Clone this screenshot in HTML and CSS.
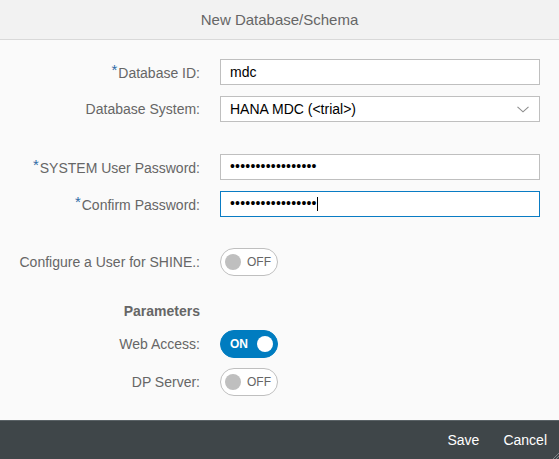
FILE: index.html
```html
<!DOCTYPE html>
<html>
<head>
<meta charset="utf-8">
<link rel="stylesheet" href="styles.css">
</head>
<body>
<div class="dialog">
  <header class="dlg-header">New Database/Schema</header>
  <main class="dlg-content">
    <div class="row r-first">
      <label class="lbl"><span class="req">*</span>Database ID:</label>
      <div class="field"><span class="val">mdc</span></div>
    </div>
    <div class="row r-tight">
      <label class="lbl">Database System:</label>
      <div class="field select"><span class="val">HANA MDC (&lt;trial&gt;)</span>
        <svg class="chev" width="12" height="7" viewBox="0 0 12 7"><path d="M0.5 0.8 L6 5.8 L11.5 0.8" fill="none" stroke="#8c8c8c" stroke-width="1.1"/></svg>
      </div>
    </div>
    <div class="row r-section">
      <label class="lbl"><span class="req">*</span>SYSTEM User Password:</label>
      <div class="field"><span class="val dots">•••••••••••••••••</span></div>
    </div>
    <div class="row r-tight">
      <label class="lbl"><span class="req">*</span>Confirm Password:</label>
      <div class="field focused"><span class="val dots">•••••••••••••••••</span><span class="caret"></span></div>
    </div>
    <div class="row r-switch1">
      <label class="lbl">Configure a User for SHINE.:</label>
      <div class="switch off"><span class="knob"></span><span class="stxt">OFF</span></div>
    </div>
    <div class="row r-heading">
      <div class="lbl heading">Parameters</div>
      <div></div>
    </div>
    <div class="row r-after-heading">
      <label class="lbl">Web Access:</label>
      <div class="switch on"><span class="stxt">ON</span><span class="knob"></span></div>
    </div>
    <div class="row r-tight2">
      <label class="lbl">DP Server:</label>
      <div class="switch off"><span class="knob"></span><span class="stxt">OFF</span></div>
    </div>
  </main>
  <footer class="dlg-footer">
    <button class="fbtn">Save</button>
    <button class="fbtn">Cancel</button>
    <svg class="grip" width="7" height="7" viewBox="0 0 7 7"><path d="M7 1 L1 7 M7 4 L4 7" stroke="#7d8589" stroke-width="1"/></svg>
  </footer>
</div>
</body>
</html>
```

FILE: styles.css
```css
* { box-sizing: border-box; }
html, body {
  margin: 0;
  padding: 0;
  width: 559px;
  height: 459px;
  overflow: hidden;
  font-family: "Liberation Sans", Arial, sans-serif;
  font-size: 14px;
  color: #666666;
}
.dialog {
  display: flex;
  flex-direction: column;
  height: 459px;
  background: #fafafa;
}
.dlg-header {
  height: 40px;
  flex: none;
  background: #f2f2f2;
  border-bottom: 1px solid #d9d9d9;
  display: flex;
  align-items: center;
  justify-content: center;
  font-size: 15px;
  color: #666666;
  padding-bottom: 1px;
}
.dlg-content {
  flex: 1;
  padding-top: 19px;
}
.row {
  display: grid;
  grid-template-columns: 200px 320px;
  column-gap: 20px;
  align-items: center;
}
.r-tight { margin-top: 11px; }
.r-section { margin-top: 32px; }
.r-switch1 { margin-top: 31px; }
.r-heading { margin-top: 25px; height: 20px; }
.r-after-heading { margin-top: 9px; }
.r-tight2 { margin-top: 10px; }
.lbl {
  text-align: right;
  white-space: nowrap;
  color: #666666;
}
.heading { font-weight: bold; }
.req {
  color: #2f6aa6;
  font-size: 15px;
  position: relative;
  top: -3px;
  margin-right: 1px;
}
.field {
  height: 26px;
  border: 1px solid #bfbfbf;
  background: #ffffff;
  display: flex;
  align-items: center;
  padding-left: 9px;
  color: #000000;
  position: relative;
}
.field.focused { border-color: #0a7cc4; }
.val { white-space: nowrap; }
.dots { font-size: 14px; letter-spacing: 0.2px; position: relative; top: -1px; }
.caret {
  display: inline-block;
  width: 1px;
  height: 14px;
  background: #000000;
  margin-left: 0px;
}
.select { justify-content: space-between; padding-right: 10px; }
.chev { flex: none; }
.switch {
  width: 58px;
  height: 28px;
  border-radius: 14px;
  display: flex;
  align-items: center;
  font-size: 12px;
}
.switch.off {
  background: #ffffff;
  border: 1px solid #bfbfbf;
  padding-left: 4px;
  color: #666666;
}
.switch.off .knob {
  width: 16px;
  height: 16px;
  border-radius: 50%;
  background: #bfbfbf;
  margin-right: 6px;
}
.switch.on {
  background: #007cc0;
  border: 1px solid #007cc0;
  padding-left: 9px;
  color: #ffffff;
  font-weight: bold;
}
.switch.on .knob {
  width: 16px;
  height: 16px;
  border-radius: 50%;
  background: #ffffff;
  margin-left: 9px;
}
.dlg-footer {
  flex: none;
  height: 39px;
  background: #3f4649;
  border-top: 1px solid #5a6266;
  display: flex;
  justify-content: flex-end;
  align-items: center;
  position: relative;
}
.fbtn {
  background: transparent;
  border: none;
  color: #ffffff;
  font-family: "Liberation Sans", Arial, sans-serif;
  font-size: 14px;
  padding: 0 12px;
  height: 38px;
}
.grip {
  position: absolute;
  right: 0;
  bottom: 0;
}
```
